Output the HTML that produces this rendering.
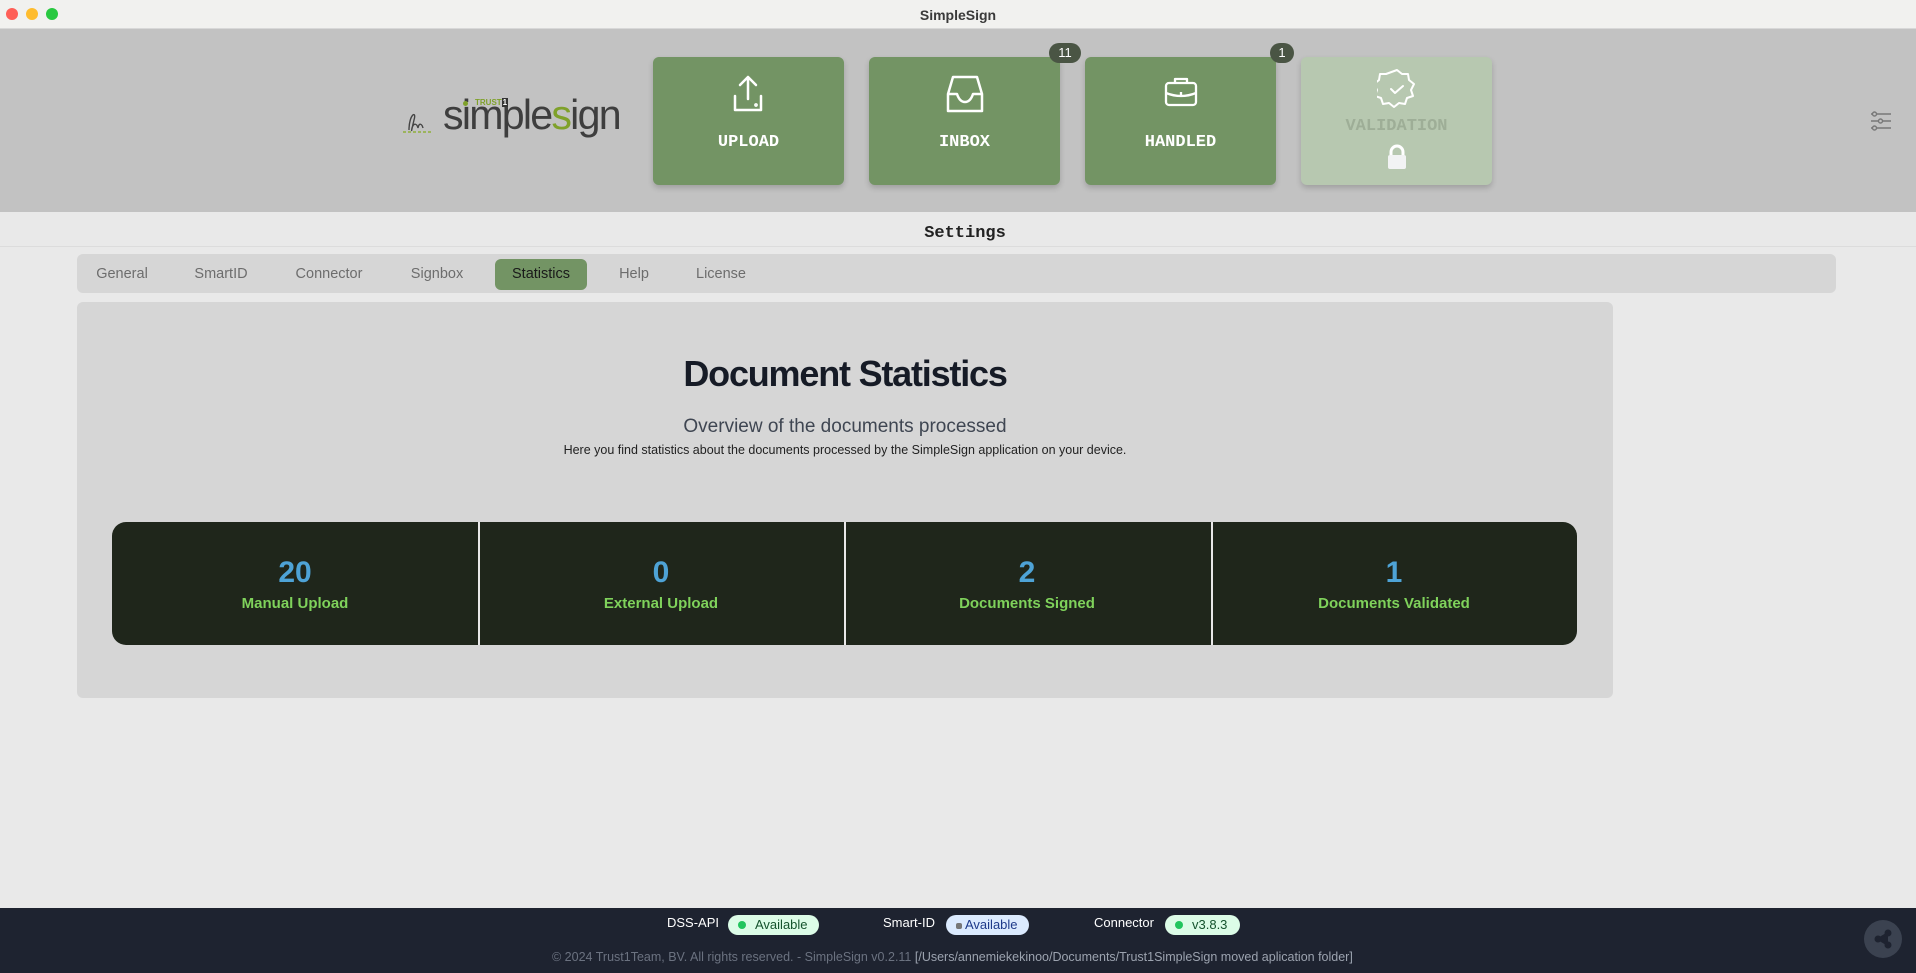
<!DOCTYPE html>
<html><head><meta charset="utf-8"><style>
*{margin:0;padding:0;box-sizing:border-box}
body{width:1916px;height:973px;position:relative;overflow:hidden;background:#e9e9e9;font-family:"Liberation Sans",sans-serif}
.abs{position:absolute}
.tb{left:0;top:0;width:1916px;height:29px;background:#f1f1ef;border-bottom:1px solid #d8d8d8}
.dot{top:8px;width:12px;height:12px;border-radius:50%}
.hdr{left:0;top:29px;width:1916px;height:183px;background:#c2c2c2}
.btn{top:57px;width:191px;height:128px;background:#739464;border-radius:6px;box-shadow:0 3px 6px rgba(0,0,0,.18);color:#fff;font-family:"Liberation Mono",monospace;font-weight:bold;font-size:17px;text-align:center}
.btn svg{position:absolute;left:77px;top:18px}
.btn .l{position:absolute;left:0;right:0;top:76px}
.badge{top:43px;height:20px;background:#4a5544;color:#fff;border-radius:10px;font-size:13px;text-align:center;line-height:20px}
.tab{top:266px;font-size:14.5px;color:#6d6d6d;transform:translateX(-50%)}
.stat{top:522px;height:123px;width:366px;text-align:center}
.stat .n{margin-top:34px;font-size:30px;font-weight:bold;color:#4ea3d6}
.stat .t{margin-top:5px;font-size:15px;font-weight:bold;color:#7fd25b}
.pill{top:915px;height:20px;border-radius:10px;font-size:13px;line-height:20px;padding-left:27px}
.pill i{position:absolute;left:10px;top:6px;width:8px;height:8px;border-radius:50%;background:#22c55e}
.fl{top:915px;font-size:13px;color:#fff}
</style></head><body>
<div class="abs tb"></div>
<div class="abs dot" style="left:6px;background:#fe5f57"></div>
<div class="abs dot" style="left:26px;background:#febc2e"></div>
<div class="abs dot" style="left:46px;background:#28c840"></div>
<div class="abs" style="left:0;width:1916px;top:7px;text-align:center;font-size:14px;font-weight:bold;color:#3a3a3a">SimpleSign</div>
<div class="abs hdr"></div>
<!-- logo -->
<div class="abs" style="left:403px;top:98px;width:220px;height:50px">
<svg width="32" height="36" class="abs" style="left:0;top:6px"><path d="M6 26 C6 10 14 6 11 16 C9 24 8 30 9 24 C11 18 14 20 15 24 C16 18 19 20 20 24" stroke="#444" stroke-width="1.4" fill="none"/><line x1="0" y1="28" x2="30" y2="28" stroke="#8fb03a" stroke-width="1.4" stroke-dasharray="3 2"/></svg>
<div class="abs" style="left:40px;top:-7px;font-size:42px;color:#3e3e3e;letter-spacing:-1.8px;font-family:'Liberation Sans',sans-serif;transform:scaleX(0.98);transform-origin:left">simple<span style="color:#7fa12a">s</span>ign</div>
<div class="abs" style="left:72px;top:0;font-size:8px;font-weight:bold;color:#7fa12a">TRUST<span style="background:#333;color:#fff;padding:0 1px">1</span></div>
<div class="abs" style="left:60px;top:3px;width:5px;height:5px;border-radius:50%;background:#7fa12a"></div>
</div>
<div class="abs btn" style="left:653px"><svg width="36" height="38" fill="none" stroke="#fff" stroke-width="2.5" stroke-linecap="round" stroke-linejoin="round"><path d="M18 24V3M10 10l8-8 8 8M5 21v14h26V21"/><circle cx="26" cy="30" r="0.6" fill="#fff"/></svg><div class="l">UPLOAD</div></div>
<div class="abs btn" style="left:869px"><svg width="38" height="38" fill="none" stroke="#fff" stroke-width="2.5" stroke-linejoin="round"><path d="M7 2h24l5 17v17H2V19zM2 19h9c2 6 5 8 8 8s6-2 8-8h9"/></svg><div class="l">INBOX</div></div>
<div class="abs btn" style="left:1085px"><svg width="38" height="38" fill="none" stroke="#fff" stroke-width="2.3" stroke-linejoin="round" style="top:16px"><rect x="4" y="10" width="30" height="22" rx="3"/><path d="M13 10V6h12v4M4 20c10 4 20 4 30 0M19 19v3"/></svg><div class="l">HANDLED</div></div>
<div class="abs btn" style="left:1301px;background:#b7c8b0;color:#9eae97"><svg width="40" height="40" fill="none" stroke="#fff" stroke-width="2" stroke-linejoin="round" style="top:11px;left:76px"><path d="M20 2l5 4 6 0 1 6 5 4-3 6 2 6-6 2-2 6-6-1-5 4-5-4-6 1-2-6-6-2 2-6-3-6 5-4 1-6 6 0z"/><path d="M14 21l4 4 8-7" stroke-linecap="round"/></svg><div class="l" style="top:60px">VALIDATION</div>
<svg width="24" height="26" style="position:absolute;left:84px;top:87px"><path d="M6 11V8a6 6 0 0 1 12 0v3" stroke="#fff" stroke-width="3" fill="none"/><rect x="3" y="11" width="18" height="14" rx="2" fill="#f2f3f4"/></svg></div>
<div class="abs badge" style="left:1049px;width:32px">11</div>
<div class="abs badge" style="left:1270px;width:24px">1</div>
<svg class="abs" style="left:1869px;top:109px" width="24" height="24" fill="none" stroke="#777" stroke-width="1.4"><path d="M7 5h15M2 5h2M13 12h9M2 12h8M7 19h15M2 19h2"/><circle cx="5.5" cy="5" r="2"/><circle cx="11.5" cy="12" r="2"/><circle cx="5.5" cy="19" r="2"/></svg>
<div class="abs" style="left:0;width:1930px;top:224px;text-align:center;font-family:'Liberation Mono',monospace;font-weight:bold;font-size:17px;color:#222">Settings</div>
<div class="abs" style="left:0;top:246px;width:1916px;height:1px;background:#dcdcdc"></div>
<div class="abs" style="left:77px;top:254px;width:1759px;height:39px;background:#d6d6d6;border-radius:6px"></div>
<div class="abs" style="left:495px;top:259px;width:92px;height:31px;background:#739464;border-radius:6px"></div>
<div class="abs tab" style="left:122px">General</div>
<div class="abs tab" style="left:221px">SmartID</div>
<div class="abs tab" style="left:329px">Connector</div>
<div class="abs tab" style="left:437px">Signbox</div>
<div class="abs tab" style="left:541px;color:#1a1a1a">Statistics</div>
<div class="abs tab" style="left:634px">Help</div>
<div class="abs tab" style="left:721px">License</div>
<div class="abs" style="left:77px;top:302px;width:1536px;height:396px;background:#d6d6d6;border-radius:6px"></div>
<div class="abs" style="left:77px;width:1536px;top:353px;text-align:center;font-size:36px;font-weight:bold;color:#161b26;letter-spacing:-1.2px">Document Statistics</div>
<div class="abs" style="left:77px;width:1536px;top:416px;text-align:center;font-size:19px;color:#3f4652">Overview of the documents processed</div>
<div class="abs" style="left:77px;width:1536px;top:443px;text-align:center;font-size:12.5px;color:#222">Here you find statistics about the documents processed by the SimpleSign application on your device.</div>
<div class="abs" style="left:112px;top:522px;width:1465px;height:123px;background:#1f261b;border-radius:14px"></div>
<div class="abs stat" style="left:112px"><div class="n">20</div><div class="t">Manual Upload</div></div>
<div class="abs stat" style="left:478px"><div class="n">0</div><div class="t">External Upload</div></div>
<div class="abs stat" style="left:844px"><div class="n">2</div><div class="t">Documents Signed</div></div>
<div class="abs stat" style="left:1211px"><div class="n">1</div><div class="t">Documents Validated</div></div>
<div class="abs" style="left:478px;top:522px;width:2px;height:123px;background:#e8e8e8"></div>
<div class="abs" style="left:844px;top:522px;width:2px;height:123px;background:#e8e8e8"></div>
<div class="abs" style="left:1211px;top:522px;width:2px;height:123px;background:#e8e8e8"></div>
<div class="abs" style="left:0;top:908px;width:1916px;height:65px;background:#1e2330"></div>
<div class="abs fl" style="left:667px">DSS-API</div>
<div class="abs pill" style="left:728px;width:91px;background:#dcfce7;color:#14532d"><i></i>Available</div>
<div class="abs fl" style="left:883px">Smart-ID</div>
<div class="abs pill" style="left:946px;width:83px;background:#dbeafe;color:#1e3a8a;padding-left:19px"><i style="background:#777;border-radius:2px;width:6px;height:6px;top:8px;left:10px"></i>Available</div>
<div class="abs fl" style="left:1094px">Connector</div>
<div class="abs pill" style="left:1165px;width:75px;background:#dcfce7;color:#14532d"><i></i>v3.8.3</div>
<div class="abs" style="left:552px;top:950px;font-size:12.5px;color:#6b7280">© 2024 Trust1Team, BV. All rights reserved. - SimpleSign v0.2.11 <span style="color:#9ca3af">[/Users/annemiekekinoo/Documents/Trust1SimpleSign moved aplication folder]</span></div>
<div class="abs" style="left:1864px;top:920px;width:38px;height:38px;border-radius:50%;background:#3b4250"></div>
<svg class="abs" style="left:1873px;top:929px" width="20" height="20" fill="#1e2330" stroke="#1e2330" stroke-width="2"><circle cx="15" cy="4" r="2.5"/><circle cx="5" cy="10" r="2.5"/><circle cx="15" cy="16" r="2.5"/><path d="M15 4L5 10l10 6"/></svg>
</body></html>
